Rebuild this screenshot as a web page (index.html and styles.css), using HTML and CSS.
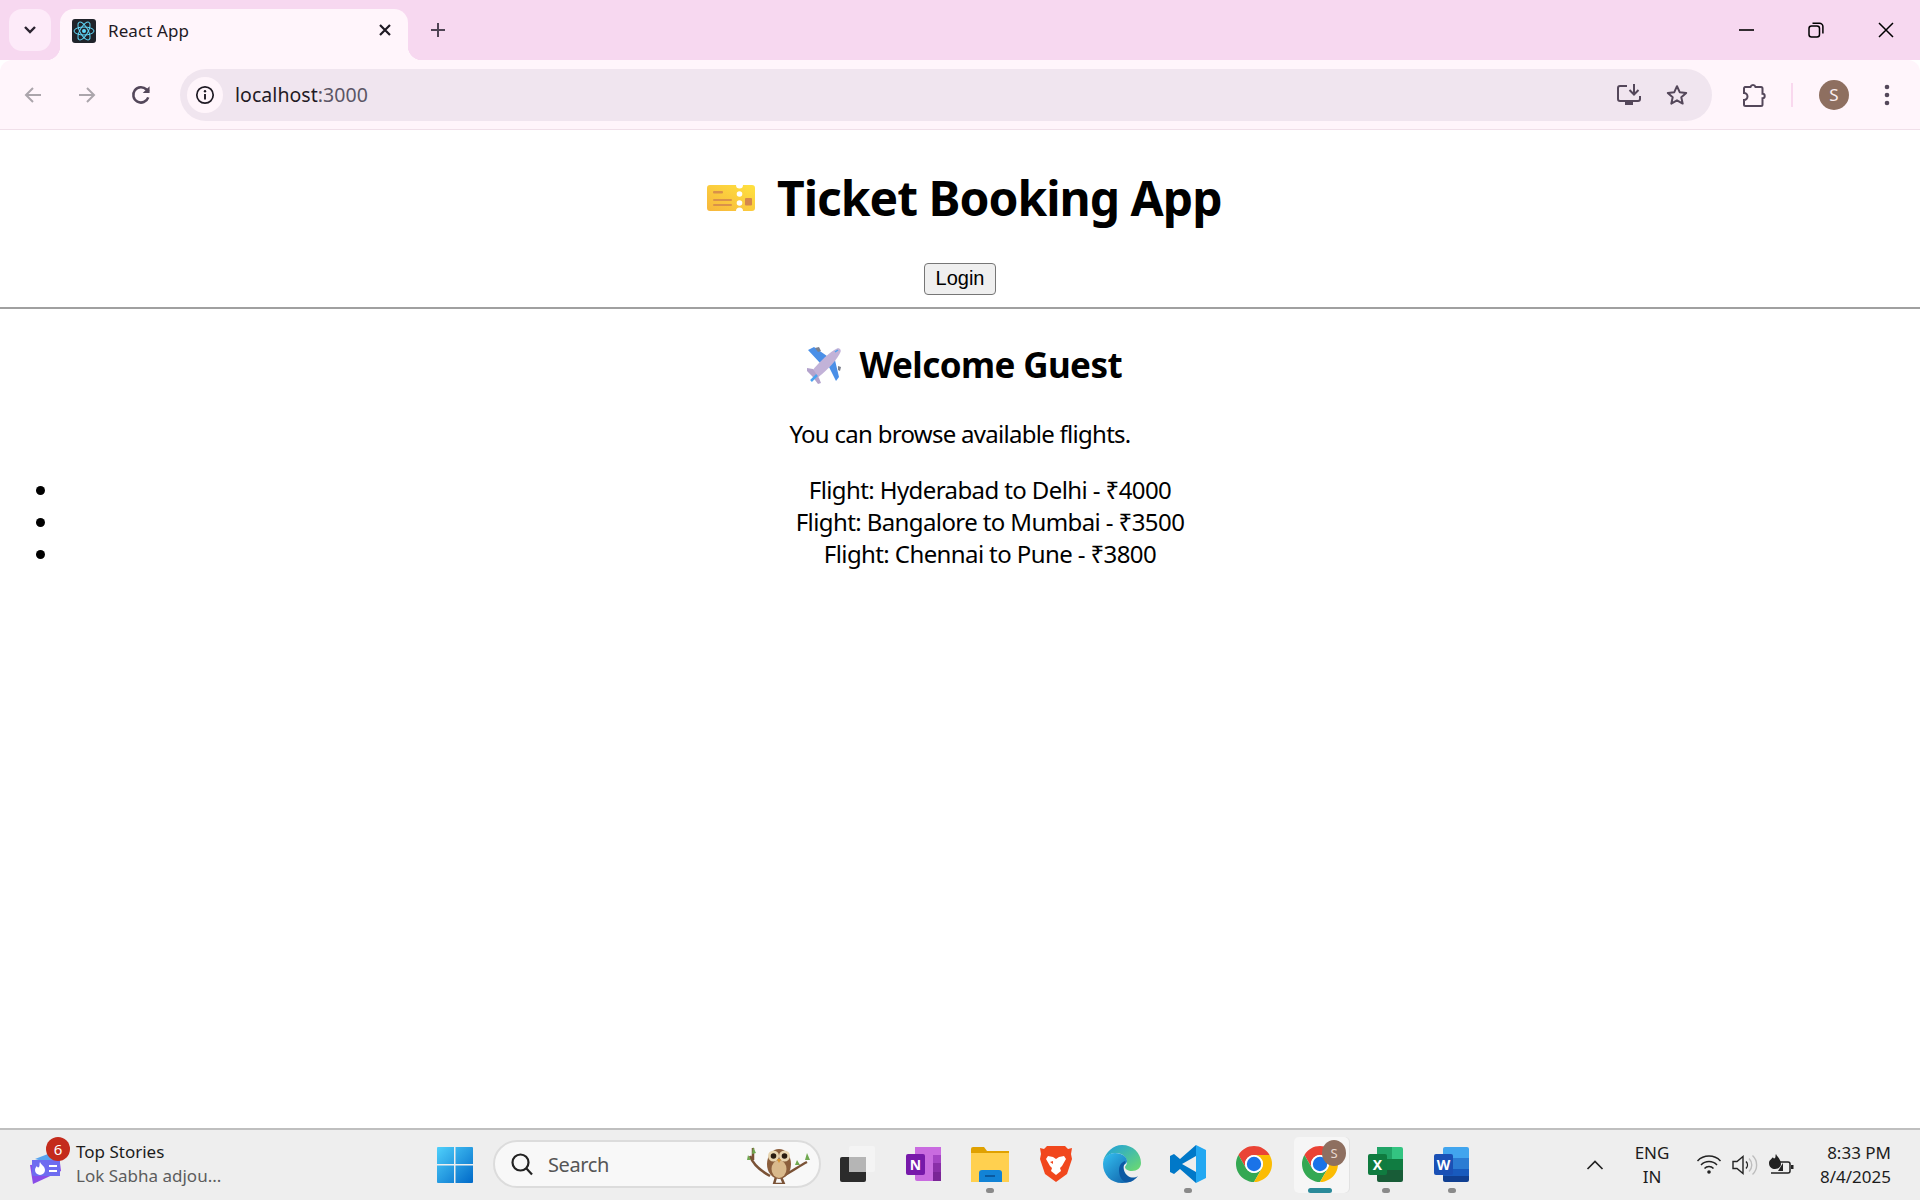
FILE: index.html
```html
<!DOCTYPE html>
<html lang="en">
<head>
    <meta charset="UTF-8">
    <meta name="viewport" content="width=device-width, initial-scale=1.0">
    <title>React App</title>
    <link rel="stylesheet" href="styles.css">
</head>
<body>
    <svg class="defs" width="0" height="0">
        <symbol id="chrome" viewBox="0 0 40 40">
            <path fill="#ea4335" d="M2.68 10A20 20 0 0 1 37.32 10H20A10 10 0 0 0 11.34 25Z"/>
            <path fill="#34a853" d="M2.68 10L11.34 25A10 10 0 0 0 28.66 25L20 40A20 20 0 0 1 2.68 10Z"/>
            <path fill="#fbbc04" d="M37.32 10H20A10 10 0 0 1 28.66 25L20 40A20 20 0 0 0 37.32 10Z"/>
            <circle cx="20" cy="20" r="10" fill="#fff"/>
            <circle cx="20" cy="20" r="8" fill="#1a73e8"/>
        </symbol>
    </svg>

    <div class="tabstrip">
        <div class="tab-search">
            <svg width="14" height="10" viewBox="0 0 14 10"><path d="M2 2l5 5 5-5" fill="none" stroke="#2b2330" stroke-width="2.4"/></svg>
        </div>
        <div class="tab">
            <svg class="favicon" width="24" height="24" viewBox="0 0 24 24">
                <rect width="24" height="24" rx="3" fill="#20232a"/>
                <g fill="none" stroke="#61dafb" stroke-width="1">
                    <ellipse cx="12" cy="12" rx="10" ry="4"/>
                    <ellipse cx="12" cy="12" rx="10" ry="4" transform="rotate(60 12 12)"/>
                    <ellipse cx="12" cy="12" rx="10" ry="4" transform="rotate(120 12 12)"/>
                </g>
                <circle cx="12" cy="12" r="2" fill="#61dafb"/>
            </svg>
            <span class="tab-title">React App</span>
            <svg class="tab-close" width="14" height="14" viewBox="0 0 14 14"><path d="M2 2l10 10M12 2L2 12" stroke="#1f1a24" stroke-width="2.2"/></svg>
        </div>
        <svg class="new-tab" width="18" height="18" viewBox="0 0 18 18"><path d="M9 2v14M2 9h14" stroke="#4f4454" stroke-width="2"/></svg>
        <div class="window-btns">
            <svg width="16" height="16" viewBox="0 0 16 16"><path d="M1 8h15" stroke="#000" stroke-width="1.6"/></svg>
            <svg width="16" height="16" viewBox="0 0 16 16" fill="none" stroke="#000" stroke-width="1.5"><rect x="1" y="4" width="10.5" height="11" rx="2.5"/><path d="M4.5 1.2h7a3.4 3.4 0 0 1 3.4 3.4v7"/></svg>
            <svg width="16" height="16" viewBox="0 0 16 16"><path d="M1 1l14 14M15 1L1 15" stroke="#000" stroke-width="1.5"/></svg>
        </div>
    </div>

    <div class="toolbar">
        <svg class="nav-btn" width="20" height="20" viewBox="0 0 20 20" fill="none" stroke="#aba5ab" stroke-width="2"><path d="M18 10H3M10 3l-7 7 7 7"/></svg>
        <svg class="nav-btn" width="20" height="20" viewBox="0 0 20 20" fill="none" stroke="#aba5ab" stroke-width="2"><path d="M2 10h15M10 3l7 7-7 7"/></svg>
        <svg class="nav-btn" width="22" height="22" viewBox="0 0 20 20" fill="none" stroke="#54475a" stroke-width="2.3"><path d="M16.600 12.200A7 7 0 1 1 15 5l2 2"/><path d="M17.800 2v6.200h-6.200" fill="#54475a" stroke="none"/></svg>
        <div class="omnibox">
            <span class="site-info">
                <svg width="20" height="20" viewBox="0 0 20 20"><circle cx="10" cy="10" r="8.2" fill="none" stroke="#1f1a24" stroke-width="1.7"/><path d="M10 9v5.4" stroke="#1f1a24" stroke-width="1.9"/><circle cx="10" cy="6.3" r="1.2" fill="#1f1a24"/></svg>
            </span>
            <span class="url">localhost<span class="url-port">:3000</span></span>
            <svg class="omni-icon" width="26" height="24" viewBox="0 0 26 24" fill="none" stroke="#54475a" stroke-width="2"><path d="M11 3H4a2 2 0 0 0-2 2v11a2 2 0 0 0 2 2h18a2 2 0 0 0 2-2v-3"/><path d="M18 1v10M13.5 7l4.5 4.5L22.500 7"/><path d="M9 20.500h8" stroke-width="3"/></svg>
            <svg class="omni-icon" width="24" height="24" viewBox="0 0 24 24"><path d="M12 3.200l2.700 6 6.500.7-4.900 4.300 1.400 6.400L12 17.300l-5.700 3.300 1.400-6.400-4.900-4.300 6.500-.7z" fill="none" stroke="#54475a" stroke-width="2" stroke-linejoin="round"/></svg>
        </div>
        <svg class="ext-icon" width="24" height="26" viewBox="0 0 24 26"><path d="M3 5h5.500a2.600 2.600 0 0 1 5 0H19a1.500 1.500 0 0 1 1.500 1.500v5.300a2 2 0 0 1 0 4.400v6.300A1.500 1.500 0 0 1 19 24H3.500A1.500 1.500 0 0 1 2 22.500V18a3.500 3.500 0 0 0 0-7V6.500A1.500 1.500 0 0 1 3 5z" fill="none" stroke="#54475a" stroke-width="2"/></svg>
        <span class="toolbar-sep"></span>
        <span class="avatar">S</span>
        <svg class="menu-icon" width="6" height="24" viewBox="0 0 6 24" fill="#54475a"><circle cx="3" cy="4" r="2.300"/><circle cx="3" cy="12" r="2.300"/><circle cx="3" cy="20" r="2.300"/></svg>
    </div>

    <main class="page">
        <header class="app-header">
            <h1>
                <svg class="ticket" width="48" height="28" viewBox="0 0 48 28">
                    <defs><linearGradient id="tk" x1="0" y1="1" x2="1" y2="0"><stop offset="0" stop-color="#f7b63c"/><stop offset="1" stop-color="#ffe23f"/></linearGradient></defs>
                    <path fill="url(#tk)" d="M3 1h26a3.500 3.500 0 0 0 7 0h9a3 3 0 0 1 3 3v20a3 3 0 0 1-3 3h-9a3.500 3.500 0 0 0-7 0H3a3 3 0 0 1-3-3V4a3 3 0 0 1 3-3z"/>
                    <circle cx="32.500" cy="10" r="2.800" fill="#fff"/>
                    <circle cx="32.500" cy="19" r="2.800" fill="#fff"/>
                    <rect x="38" y="14" width="7" height="7.500" rx="1" fill="#d5874b"/>
                    <g fill="#d9914a"><rect x="6" y="7" width="10" height="2.500" rx="1"/><rect x="6" y="15" width="19" height="2" rx="1"/><rect x="6" y="20" width="19" height="2" rx="1"/></g>
                </svg>
                Ticket Booking App
            </h1>
            <button class="login-btn">Login</button>
        </header>
        <hr class="divider">
        <section class="guest">
            <h2>
                <svg class="plane" width="37" height="38" viewBox="0 0 37 38">
                    <path fill="#4a8fe7" d="M2 4l6-3 13 9-7 7zM21 17l7-7 5 21-3 4z"/>
                    <path fill="#7b7f8c" d="M9 2l4-1 2 4-3 1zM32 20l3 1-1 4-2-1z"/>
                    <path fill="#c2b2d8" d="M6 25C14 15 24 6 31 2.500c2-1 4.500 1 3.500 3.500-3 7-12 17-22 25l-5-.5z"/>
                    <path fill="#b4a3cc" d="M1 22l6 1 6 9 2 5-3 1-6-8-5-5zM5 30l3 3"/>
                    <path d="M5 35l6-6" stroke="#4aa3ef" stroke-width="2.500"/>
                    <path d="M29 6l3-2" stroke="#4aa3ef" stroke-width="1.500"/>
                </svg>
                Welcome Guest
            </h2>
            <p>You can browse available flights.</p>
        </section>
        <ul class="flights">
            <li>Flight: Hyderabad to Delhi - ₹4000</li>
            <li>Flight: Bangalore to Mumbai - ₹3500</li>
            <li>Flight: Chennai to Pune - ₹3800</li>
        </ul>
    </main>

    <footer class="taskbar">
        <div class="news">
            <span class="news-icon">
                <svg width="34" height="34" viewBox="0 0 34 34">
                    <path fill="#5aa5f0" d="M6 8l18-7v12z"/>
                    <path fill="#8a4de8" d="M1 14l30-2 1 8-28 13z"/>
                    <path fill="#6e6cf0" d="M3 9h28v16H5a2 2 0 0 1-2-2z"/>
                    <path fill="#fff" d="M11 11c1 3 5 4 5 8a5 5 0 0 1-10 0c0-2 1-3 2-4 0 1 1 2 2 1 1-1 0-3 1-5z"/>
                    <path stroke="#fff" stroke-width="2" d="M20 15h8M20 20h8"/>
                </svg>
                <span class="news-badge">6</span>
            </span>
            <div class="news-text">
                <span class="news-title">Top Stories</span>
                <span class="news-sub">Lok Sabha adjou...</span>
            </div>
        </div>
        <svg class="win-logo" width="36" height="36" viewBox="0 0 36 36">
            <defs><linearGradient id="wn" x1="0" y1="0" x2="1" y2="1"><stop offset="0" stop-color="#4fd0fb"/><stop offset="1" stop-color="#0069c8"/></linearGradient></defs>
            <path fill="url(#wn)" d="M1 0h16v17H0V1a1 1 0 0 1 1-1zM18.500 0H35a1 1 0 0 1 1 1v16H18.500zM0 18.500h17V36H1a1 1 0 0 1-1-1zM18.500 18.500H36V35a1 1 0 0 1-1 1H18.500z"/>
        </svg>
        <div class="searchbox">
            <svg width="24" height="24" viewBox="0 0 24 24" fill="none" stroke="#222" stroke-width="2.200"><circle cx="10.500" cy="10.500" r="8"/><path d="M16 16l6 6.500"/></svg>
            <span class="search-label">Search</span>
            <svg class="owl" width="64" height="40" viewBox="0 0 64 40">
                <path d="M3 12c3 8 9 14 20 20M60 18c-8 4-17 11-26 15M6 4v12M29 33l-2 7h10l-3-7" fill="none" stroke="#7a5236" stroke-width="2.500"/>
                <path fill="#6fa84f" d="M6 3l3 6-4 1zM1 11l3 5-4 0zM60 9l3 7-5 0zM50 16l3 5-5 0z"/>
                <ellipse cx="32" cy="20" rx="12" ry="15" fill="#8b5e3c"/>
                <ellipse cx="32" cy="25" rx="7.500" ry="9" fill="#d9b98c"/>
                <circle cx="26.500" cy="12" r="5.500" fill="#e8d5b0"/>
                <circle cx="37.500" cy="12" r="5.500" fill="#e8d5b0"/>
                <circle cx="26.500" cy="12" r="2.800" fill="#2a1c10"/>
                <circle cx="37.500" cy="12" r="2.800" fill="#2a1c10"/>
                <path fill="#d9942e" d="M30 15h4l-2 4z"/>
            </svg>
        </div>
        <div class="task-apps">
            <div class="task-app">
                <svg width="36" height="36" viewBox="0 0 36 36">
                    <rect x="0" y="11" width="26" height="25" rx="2" fill="#2b2b2b"/>
                    <rect x="9" y="0" width="26" height="26" rx="2" fill="#f4f4f4"/>
                    <rect x="9" y="11" width="17" height="15" fill="#b5b5b5"/>
                </svg>
            </div>
            <div class="task-app">
                <svg width="36" height="36" viewBox="0 0 36 36">
                    <path fill="#c96be0" d="M9 1h26v34H11a2 2 0 0 1-2-2z"/>
                    <path fill="#a545c4" d="M27 9h8v8h-8z"/>
                    <path fill="#8a2fa8" d="M27 17h8v9h-8z"/>
                    <path fill="#7a2596" d="M27 26h8v9h-8z"/>
                    <rect x="0" y="8" width="19" height="21" rx="2" fill="#7719aa"/>
                    <text class="app-letter" x="9.500" y="24">N</text>
                </svg>
            </div>
            <div class="task-app running">
                <svg width="38" height="36" viewBox="0 0 38 36">
                    <path fill="#e0a100" d="M0 3a2 2 0 0 1 2-2h11l3 4h22v6H0z"/>
                    <path fill="#ffd04f" d="M0 7h38v29H0z"/>
                    <path fill="#1283d6" d="M14 27a3 3 0 0 1 3-3h17a3 3 0 0 1 3 3v9H14z" transform="translate(-6 0)"/>
                    <path d="M14 30h10" stroke="#0a5aa0" stroke-width="2"/>
                </svg>
            </div>
            <div class="task-app">
                <svg width="32" height="38" viewBox="0 0 32 38">
                    <path fill="#f1471d" d="M7 1h18l3 3 4-1-1 6 1 5-5 15-11 8-11-8-5-15 1-5-1-6 4 1z"/>
                    <path fill="#fff" d="M8 11l5 1 3 2 3-2 5-1 2 3-4 7-2 2 1 3-5 4-5-4 1-3-2-2-4-7zM13 16l-3 1 3 2zM19 16l3 1-3 2z"/>
                </svg>
            </div>
            <div class="task-app">
                <svg width="38" height="38" viewBox="0 0 38 38">
                    <defs>
                        <linearGradient id="ed1" x1="0" y1="0" x2="1" y2="1"><stop offset="0" stop-color="#35c1f1"/><stop offset="1" stop-color="#0c59a4"/></linearGradient>
                        <linearGradient id="ed2" x1="0" y1="0" x2="1" y2="1"><stop offset="0" stop-color="#1b9de2"/><stop offset="1" stop-color="#6fdc6c"/></linearGradient>
                    </defs>
                    <path fill="url(#ed2)" d="M19 0c11 0 19 8 19 18 0 5-4 8-9 8-4 0-7-2-7-4 0-1 2-2 2-5 0-5-5-9-11-9-6 0-10 3-13 8C3 7 10 0 19 0z"/>
                    <path fill="url(#ed1)" d="M0 19c0-7 6-11 12-11 7 0 12 4 12 8 0 3-3 3-5 6-2 4 0 9 5 12 2 1 5 2 7 1-3 2-7 3-12 3C8 38 0 30 0 19z"/>
                    <path fill="#0c59a4" d="M16 25c0-5 3-8 6-9 1 1 0 3-1 4-1 3 0 8 4 11 3 2 7 2 10 0-3 4-8 7-13 6-4-2-6-7-6-12z"/>
                </svg>
            </div>
            <div class="task-app running">
                <svg width="36" height="38" viewBox="0 0 36 38">
                    <path fill="#23a8f2" d="M26 0l10 5v28l-10 5z"/>
                    <path fill="#0078c8" d="M26 0v11L12 19l14 8v11L10 24l-6 5-4-2V11l4-2 6 5z"/>
                </svg>
            </div>
            <div class="task-app">
                <svg width="36" height="36" viewBox="0 0 40 40"><use href="#chrome"/></svg>
            </div>
            <div class="task-app active">
                <svg width="36" height="38" viewBox="0 0 40 40"><use href="#chrome"/></svg>
                <span class="chrome-badge">S</span>
            </div>
            <div class="task-app running">
                <svg width="36" height="36" viewBox="0 0 36 36">
                    <path fill="#21a366" d="M9 1h15v12H9z"/>
                    <path fill="#33c481" d="M24 1h9a2 2 0 0 1 2 2v10H24z"/>
                    <path fill="#107c41" d="M9 13h26v11H9z"/>
                    <path fill="#185c37" d="M9 24h26v10a2 2 0 0 1-2 2H11a2 2 0 0 1-2-2z"/>
                    <rect x="0" y="8" width="19" height="21" rx="2" fill="#0f7b3f"/>
                    <text class="app-letter" x="9.500" y="24">X</text>
                </svg>
            </div>
            <div class="task-app running">
                <svg width="36" height="36" viewBox="0 0 36 36">
                    <path fill="#41a5ee" d="M9 3a2 2 0 0 1 2-2h22a2 2 0 0 1 2 2v9H9z"/>
                    <path fill="#2b7cd3" d="M9 12h26v11H9z"/>
                    <path fill="#185abd" d="M9 23h26v7H9z"/>
                    <path fill="#103f91" d="M9 30h26v4a2 2 0 0 1-2 2H11a2 2 0 0 1-2-2z"/>
                    <rect x="0" y="8" width="19" height="21" rx="2" fill="#1a50b5"/>
                    <text class="app-letter" x="9.500" y="24">W</text>
                </svg>
            </div>
        </div>
        <div class="tray">
            <svg class="tray-caret" width="18" height="10" viewBox="0 0 18 10"><path d="M1.500 9L9 1.500 16.500 9" fill="none" stroke="#222" stroke-width="1.700"/></svg>
            <div class="lang"><span>ENG</span><span>IN</span></div>
            <div class="tray-icons">
                <svg width="26" height="22" viewBox="0 0 26 22" fill="none" stroke="#222" stroke-width="1.500"><path d="M1.500 8a16 16 0 0 1 23 0M5 12a11 11 0 0 1 16 0M8.500 15.500a6 6 0 0 1 9 0"/><circle cx="13" cy="19" r="1.800" fill="#222" stroke="none"/></svg>
                <svg width="26" height="24" viewBox="0 0 26 24" fill="none" stroke="#222" stroke-width="1.400"><path d="M1 8.500h4L11 3.500v17L5 15.500H1z"/><path d="M14 8.500a5 5 0 0 1 0 7"/><path d="M17 5.500a9 9 0 0 1 0 13M20.500 2.500a13 13 0 0 1 0 19" stroke="#bdbdbd"/></svg>
                <svg width="26" height="24" viewBox="0 0 26 24"><path d="M8 1c1 3 5 5 5 10 0 3-3 5-6 5s-6-2-6-6c0-3 3-4 4-6 0 1 1 2 2 1 1-1 0-3 1-4z" fill="#222"/><path d="M5 9h15a2 2 0 0 1 2 2v7a2 2 0 0 1-2 2H3" fill="none" stroke="#222" stroke-width="1.500"/><path d="M10 18l5-8v8z" fill="#222"/><rect x="23" y="12" width="2.500" height="4" fill="#222"/></svg>
            </div>
            <div class="clock"><span>8:33 PM</span><span>8/4/2025</span></div>
        </div>
    </footer>
</body>
</html>
```

FILE: styles.css
```css
* {
    box-sizing: border-box;
}
body {
    margin: 0;
    height: 100vh;
    display: flex;
    flex-direction: column;
    overflow: hidden;
    font-family: "Noto Sans", "Open Sans", sans-serif;
    background: #fff;
    color: #000;
}
.defs {
    display: block;
    height: 0;
}

/* browser chrome */
.tabstrip {
    height: 60px;
    flex-shrink: 0;
    display: flex;
    align-items: flex-end;
    padding-left: 9px;
    background: #f7d8f0;
}
.tab-search {
    width: 42px;
    height: 42px;
    margin-bottom: 9px;
    border-radius: 13px;
    background: #fdebf9;
    display: flex;
    align-items: center;
    justify-content: center;
}
.tab {
    position: relative;
    width: 348px;
    height: 51px;
    margin-left: 9px;
    padding: 0 16px 8px 12px;
    display: flex;
    align-items: center;
    border-radius: 14px 14px 0 0;
    background: #fff5fb;
}
.tab::before,
.tab::after {
    content: "";
    position: absolute;
    bottom: 0;
    width: 14px;
    height: 14px;
}
.tab::before {
    left: -14px;
    background: radial-gradient(circle at 0 0, transparent 14px, #fff5fb 14.5px);
}
.tab::after {
    right: -14px;
    background: radial-gradient(circle at 100% 0, transparent 14px, #fff5fb 14.5px);
}
.tab-title {
    flex: 1;
    margin-left: 12px;
    font-size: 17px;
    letter-spacing: 0.1px;
    color: #1f1a24;
}
.tab-close {
    margin-bottom: 2px;
}
.new-tab {
    margin: 0 0 21px 21px;
}
.window-btns {
    margin-left: auto;
    height: 60px;
    padding: 22px 26px 0 0;
    display: flex;
    gap: 54px;
}
.toolbar {
    height: 70px;
    flex-shrink: 0;
    display: flex;
    align-items: center;
    padding-left: 23px;
    background: #fff5fb;
    border-bottom: 1px solid #f0dfe9;
    border-radius: 12px 12px 0 0;
}
.nav-btn {
    margin-right: 34px;
}
.nav-btn:nth-child(2) {
    margin-right: 33px;
}
.nav-btn:nth-child(3) {
    margin-right: 28px;
}
.omnibox {
    width: 1532px;
    height: 52px;
    display: flex;
    align-items: center;
    padding: 0 0 0 7px;
    border-radius: 26px;
    background: #f0e5ef;
}
.site-info {
    width: 36px;
    height: 36px;
    border-radius: 50%;
    background: #fff5fb;
    display: flex;
    align-items: center;
    justify-content: center;
}
.url {
    flex: 1;
    margin-left: 12px;
    font-size: 19.5px;
    letter-spacing: 0.05px;
    color: #1f1a24;
}
.url-port {
    color: #5b5565;
}
.omni-icon {
    margin-right: 23px;
}
.ext-icon {
    margin-left: 30px;
}
.toolbar-sep {
    width: 2px;
    height: 24px;
    margin-left: 25px;
    background: #f9d8ee;
}
.avatar {
    width: 30px;
    height: 30px;
    margin-left: 26px;
    border-radius: 50%;
    background: #8e6f60;
    color: #fbeef0;
    font-size: 17px;
    display: flex;
    align-items: center;
    justify-content: center;
}
.menu-icon {
    margin-left: 35px;
}

/* the app */
.page {
    flex: 1;
    font-size: 24px;
    line-height: 32px;
}
.app-header {
    text-align: center;
    height: 177px;
}
h1 {
    margin: 0;
    padding-top: 36px;
    height: 130px;
    font-size: 48px;
    line-height: 64px;
    font-weight: 700;
    letter-spacing: -1px;
}
.ticket {
    margin: 0 11px 0 8px;
    vertical-align: 4px;
}
.login-btn {
    width: 72px;
    height: 32px;
    padding: 0;
    font-family: "Liberation Sans", Arial, sans-serif;
    font-size: 20px;
    color: #000;
    background: #efefef;
    border: 1.5px solid #767676;
    border-radius: 4px;
}
.divider {
    margin: 0;
    height: 2px;
    border: 0;
    background: #a0a0a0;
}
.guest {
    text-align: center;
}
h2 {
    margin: 0;
    padding-top: 32px;
    height: 88px;
    font-size: 35px;
    line-height: 48px;
    font-weight: 700;
    letter-spacing: -0.6px;
}
.plane {
    margin: 0 8px 0 8px;
    vertical-align: -6px;
}
.guest p {
    margin: 0;
    padding: 21px 0 24px;
    letter-spacing: -0.72px;
    line-height: 32px;
}
.flights {
    margin: 0;
    padding-left: 60px;
    text-align: center;
    letter-spacing: -0.6px;
    list-style: disc;
}

/* windows taskbar */
.taskbar {
    height: 72px;
    flex-shrink: 0;
    display: flex;
    align-items: center;
    background: #eee;
    border-top: 2px solid #bfbfbf;
    font-size: 17px;
    color: #1c1c1c;
}
.news {
    width: 437px;
    display: flex;
    align-items: center;
    padding-left: 29px;
    margin-bottom: 2px;
}
.news-icon {
    position: relative;
    display: block;
    height: 34px;
    margin-top: 8px;
}
.news-badge {
    position: absolute;
    top: -14px;
    left: 17px;
    width: 24px;
    height: 24px;
    border-radius: 50%;
    background: #c42b1c;
    color: #fff;
    font-size: 15px;
    line-height: 24px;
    text-align: center;
}
.news-text {
    display: flex;
    flex-direction: column;
    margin-left: 13px;
    line-height: 24px;
}
.news-sub {
    color: #5c5c5c;
}
.win-logo {
    margin-right: 20px;
}
.searchbox {
    width: 328px;
    height: 48px;
    margin-bottom: 2px;
    display: flex;
    align-items: center;
    padding-left: 15px;
    border-radius: 24px;
    background: #f8f8f8;
    border: 2px solid #dcdcdc;
    color: #555;
    font-size: 20px;
}
.search-label {
    flex: 1;
    margin-left: 14px;
    letter-spacing: -0.4px;
}
.owl {
    margin-right: 8px;
}
.task-apps {
    margin-left: 4px;
    display: flex;
}
.task-app {
    position: relative;
    width: 66px;
    height: 56px;
    display: flex;
    align-items: center;
    justify-content: center;
    padding-bottom: 2px;
}
.running::after,
.active::after {
    content: "";
    position: absolute;
    left: 29px;
    bottom: 0;
    width: 8px;
    height: 5px;
    border-radius: 3px;
    background: #8a8a8a;
}
.active {
    margin: 0 7px;
    width: 52px;
    border-radius: 5px;
    background: #f6f6f6;
    box-shadow: 3px 0 0 #f6f6f6, 4px 0 0 #e2e2e2;
}
.active::after {
    left: 14px;
    width: 24px;
    background: #2a8a9a;
}
.chrome-badge {
    position: absolute;
    top: 3px;
    right: 0;
    width: 24px;
    height: 26px;
    border-radius: 50%;
    background: #8e6f60;
    color: #e8d8d0;
    font-size: 13px;
    line-height: 26px;
    text-align: center;
}
.app-letter {
    fill: #fff;
    font-family: "Noto Sans", sans-serif;
    font-size: 14px;
    font-weight: 700;
    text-anchor: middle;
}
.tray {
    flex: 1;
    display: flex;
    align-items: center;
    padding-right: 29px;
}
.tray-caret {
    margin-left: 101px;
}
.lang {
    width: 60px;
    margin-left: 18px;
    display: flex;
    flex-direction: column;
    align-items: center;
    line-height: 24px;
}
.tray-icons {
    margin-left: 14px;
    display: flex;
    gap: 10px;
}
.clock {
    margin-left: auto;
    display: flex;
    flex-direction: column;
    align-items: flex-end;
    line-height: 24px;
}
```
